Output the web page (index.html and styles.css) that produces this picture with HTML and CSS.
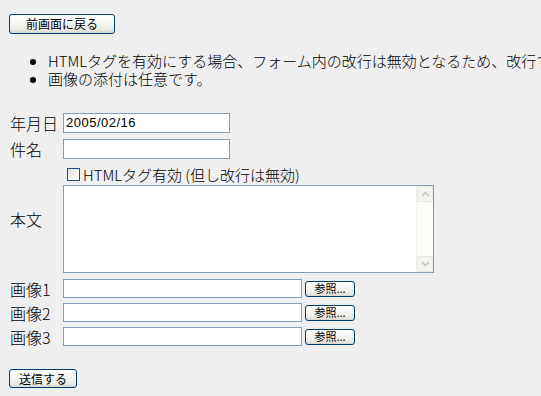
FILE: index.html
```html
<!DOCTYPE html>
<html lang="ja">
<head>
<meta charset="utf-8">
<link rel="stylesheet" href="styles.css">
</head>
<body>
<div class="page">
  <button class="btn btn-back" type="button">前画面に戻る</button>
  <ul class="notes">
    <li>HTMLタグを有効にする場合、フォーム内の改行は無効となるため、改行する場合は&lt;br&gt;タグを使用してください。</li>
    <li>画像の添付は任意です。</li>
  </ul>
  <form class="form">
    <div class="row row-date">
      <label class="lbl">年月日</label>
      <div class="field"><span class="input input-text">2005/02/16</span></div>
    </div>
    <div class="row row-subject">
      <label class="lbl">件名</label>
      <div class="field"><span class="input input-text"></span></div>
    </div>
    <div class="row row-body">
      <label class="lbl">本文</label>
      <div class="field field-body">
        <div class="check-line"><span class="checkbox"></span><span class="check-text">HTMLタグ有効 (但し改行は無効)</span></div>
        <div class="textarea">
          <div class="ta-content"></div>
          <div class="scrollbar">
            <div class="sb-btn"><svg width="9" height="6" viewBox="0 0 9 6"><path d="M1 5 L4.5 1.5 L8 5" fill="none" stroke="#c9c8c0" stroke-width="1.6"/></svg></div>
            <div class="sb-track"></div>
            <div class="sb-btn"><svg width="9" height="6" viewBox="0 0 9 6"><path d="M1 1 L4.5 4.5 L8 1" fill="none" stroke="#c9c8c0" stroke-width="1.6"/></svg></div>
          </div>
        </div>
      </div>
    </div>
    <div class="row row-file">
      <label class="lbl">画像1</label>
      <div class="field field-file"><span class="input input-file"></span><button class="btn btn-browse" type="button">参照...</button></div>
    </div>
    <div class="row row-file">
      <label class="lbl">画像2</label>
      <div class="field field-file"><span class="input input-file"></span><button class="btn btn-browse" type="button">参照...</button></div>
    </div>
    <div class="row row-file">
      <label class="lbl">画像3</label>
      <div class="field field-file"><span class="input input-file"></span><button class="btn btn-browse" type="button">参照...</button></div>
    </div>
    <button class="btn btn-submit" type="button">送信する</button>
  </form>
</div>
</body>
</html>
```
FILE: styles.css
```css
html, body {
  margin: 0;
  padding: 0;
  background: #efefef;
  overflow: hidden;
}
body {
  width: 541px;
  height: 396px;
  font-family: "Noto Sans CJK JP", "Noto Sans", sans-serif;
  font-weight: 300;
  color: #000;
}
.page {
  padding: 14px 0 0 9px;
}
.btn {
  display: block;
  box-sizing: border-box;
  border: 1px solid #003c74;
  border-radius: 3px;
  background: linear-gradient(#ffffff 0%, #f7f7f4 40%, #ecebe5 80%, #d8d4cc 100%);
  font-family: "Noto Sans CJK JP", sans-serif;
  font-weight: 400;
  font-size: 12px;
  line-height: 1;
  color: #000;
  padding: 0;
  margin: 0;
  text-align: center;
}
.btn-back {
  width: 106px;
  height: 20px;
}
.notes {
  margin: 18px 0 0 0;
  padding: 0 0 0 39px;
  font-size: 15px;
  line-height: 18px;
  white-space: nowrap;
}
.form {
  margin-top: 25px;
  display: flex;
  flex-direction: column;
}
.row {
  display: flex;
  align-items: center;
}
.lbl {
  width: 53px;
  padding-left: 1px;
  font-size: 16px;
  line-height: 18px;
}
.field {
  display: flex;
  align-items: center;
}
.input {
  box-sizing: border-box;
  display: block;
  border: 1px solid #7f9db9;
  background: #fff;
}
.input-text {
  width: 167px;
  height: 20px;
  font-family: "Liberation Sans", Arial, sans-serif;
  font-weight: 400;
  font-size: 13px;
  letter-spacing: 0.5px;
  line-height: 18px;
  padding-left: 2px;
}
.row-subject {
  margin-top: 6px;
}
.row-body {
  margin-top: 5px;
}
.field-body {
  flex-direction: column;
  align-items: flex-start;
}
.check-line {
  display: flex;
  align-items: center;
  height: 21px;
  font-size: 15px;
}
.checkbox {
  box-sizing: border-box;
  width: 13px;
  height: 13px;
  margin-left: 4px;
  margin-right: 3px;
  border: 1px solid #1c5180;
  background: linear-gradient(135deg, #dcdcd7 0%, #f4f4f1 60%, #ffffff 100%);
}
.check-text {
  line-height: 17px;
}
.textarea {
  box-sizing: border-box;
  width: 371px;
  height: 88px;
  border: 1px solid #7f9db9;
  background: #fff;
  display: flex;
}
.ta-content {
  flex: 1;
}
.scrollbar {
  width: 16px;
  display: flex;
  flex-direction: column;
  background: #fbfbf8;
  border-left: 1px solid #f2f1ec;
}
.sb-btn {
  box-sizing: border-box;
  height: 16px;
  border: 1px solid #e8e7e0;
  border-radius: 2px;
  background: #f4f4ef;
  display: flex;
  align-items: center;
  justify-content: center;
}
.sb-track {
  flex: 1;
}
.row-file {
  margin-top: 5px;
}
.row-body + .row-file {
  margin-top: 6px;
}
.field-file {
  gap: 3px;
}
.input-file {
  width: 239px;
  height: 19px;
}
.btn-browse {
  width: 50px;
  height: 16px;
  font-size: 11px;
}
.btn-submit {
  width: 68px;
  height: 19px;
  margin-top: 23px;
}
```
